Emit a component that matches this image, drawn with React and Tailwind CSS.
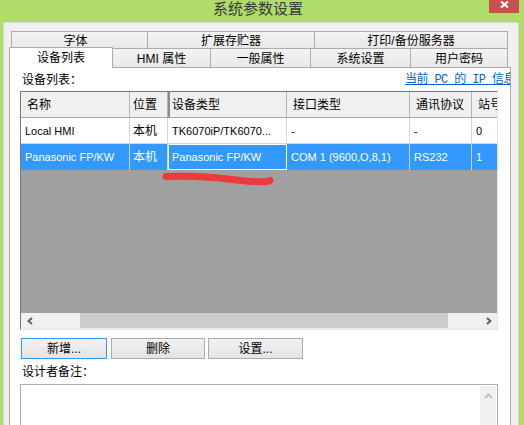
import React from "react";

const Chevron = ({ dir, color = "#606060" }) => {
  const pts =
    dir === "left"
      ? "5,1 1.5,4 5,7"
      : dir === "right"
      ? "1,1 4.5,4 1,7"
      : "1,5 4.5,1.5 8,5";
  const w = dir === "up" ? 9 : 6;
  const h = dir === "up" ? 6 : 8;
  return (
    <svg width={w} height={h} viewBox={`0 0 ${w} ${h}`}>
      <polyline points={pts} fill="none" stroke={color} strokeWidth="2" />
    </svg>
  );
};

const Tab1 = ({ w, first, children }) => (
  <div
    className={`${w} h-full border-t border-r ${first ? "border-l" : ""} border-[#acacac] bg-linear-to-b from-[#f3f3f3] to-[#e9e9e9] flex justify-center pt-[2px] text-[12px] leading-[14px]`}
  >
    {children}
  </div>
);

const Tab2 = ({ w, children }) => (
  <div
    className={`${w} h-[19px] border-t border-r border-[#acacac] bg-linear-to-b from-[#f3f3f3] to-[#e9e9e9] flex justify-center pt-[3px] text-[12px] leading-[14px]`}
  >
    {children}
  </div>
);

const cols = ["w-[109px]", "w-[38px]", "w-[119px]", "w-[123px]", "w-[62px]", "w-[25px]"];

export default function App() {
  const header = ["名称", "位置", "设备类型", "接口类型", "通讯协议", "站号"];
  const row1 = ["Local HMI", "本机", "TK6070iP/TK6070...", "-", "-", "0"];
  const row2 = ["Panasonic FP/KW", "本机", "Panasonic FP/KW", "COM 1 (9600,O,8,1)", "RS232", "1"];
  const latin = [true, false, true, true, true, true];

  return (
    <div className="relative w-[524px] h-[425px] overflow-hidden bg-[#b0dd6a] font-['Liberation_Sans','Noto_Sans_CJK_SC',sans-serif] text-black flex flex-col">
      {/* Title bar */}
      <div className="relative h-[22px] shrink-0 flex justify-center pr-[8px]">
        <span className="text-[15px] leading-[17px] text-[#3a3a3a]">系统参数设置</span>
        <div className="absolute right-[5px] top-0 w-[30px] h-[13px] bg-[#c75050] flex justify-center items-start pt-[1px]">
          <svg width="9" height="7" viewBox="0 0 9 7">
            <path d="M1 0.5 L8 6.5 M8 0.5 L1 6.5" stroke="#fff" strokeWidth="2" />
          </svg>
        </div>
      </div>

      {/* Dialog body */}
      <div className="ml-[3px] w-[516px] flex-1 bg-[#f0f0f0] border-t border-l border-r border-[#d6d6d6] pl-[5px] pt-[8px] flex flex-col">
        {/* Tab row 1 */}
        <div className="flex ml-[2px] h-[17px] shrink-0">
          <Tab1 w="w-[137px]" first>
            <span className="pr-[8px]">字体</span>
          </Tab1>
          <Tab1 w="w-[167px]">扩展存贮器</Tab1>
          <Tab1 w="w-[193px]">打印/备份服务器</Tab1>
        </div>
        {/* Tab row 2 */}
        <div className="flex h-[19px] items-start relative z-10 shrink-0">
          <div className="w-[104px] h-[21px] -mt-[1px] bg-white border-t border-l border-r border-[#acacac] flex justify-center pt-[3px] text-[12px] leading-[14px]">
            设备列表
          </div>
          <Tab2 w="w-[98px]">HMI 属性</Tab2>
          <Tab2 w="w-[100px]">一般属性</Tab2>
          <Tab2 w="w-[100px]">系统设置</Tab2>
          <Tab2 w="w-[97px]">用户密码</Tab2>
        </div>

        {/* Pane */}
        <div className="w-[502px] flex-1 bg-white border border-[#acacac] pl-[10px] overflow-hidden flex flex-col">
          <div className="h-[23px] shrink-0 flex items-center whitespace-nowrap">
            <div className="w-[385px] shrink-0 pl-[2px] text-[12px] leading-[14px]">设备列表：</div>
            <div className="shrink-0 text-[12px] leading-[14px] text-[#0066cc] underline font-['Liberation_Mono','Noto_Sans_CJK_SC',monospace] tracking-[-0.6px]">
              当前 PC 的 IP 信息
            </div>
          </div>

          {/* List view */}
          <div className="w-[478px] shrink-0 border-t border-l border-t-[#7a7a7a] border-l-[#7a7a7a] border-b border-r border-b-[#e3e3e3] border-r-[#e3e3e3] flex flex-col">
            <div className="flex h-[26px] bg-[#f0f0f0] border-b border-[#a8a8a8]">
              {header.map((h, i) => (
                <div
                  key={i}
                  className={`${cols[i]} h-full shrink-0 overflow-hidden whitespace-nowrap flex items-center text-[12px] leading-[14px] ${i < 5 ? "border-r border-[#b4b4b4]" : ""} ${i === 2 ? "shadow-[inset_2px_0_0_#8c8c8c] pl-[4px]" : i === 1 ? "pl-[3px]" : "pl-[6px]"}`}
                >
                  {h}
                </div>
              ))}
            </div>
            <div className="flex h-[26px] bg-white border-b border-[#d4d4d4]">
              {row1.map((c, i) => (
                <div
                  key={i}
                  className={`${cols[i]} h-full shrink-0 overflow-hidden whitespace-nowrap flex items-center ${latin[i] ? "text-[11px]" : "text-[12px]"} leading-[14px] ${i < 5 ? "border-r border-[#d4d4d4]" : ""} ${i === 1 ? "pl-[3px]" : "pl-[4px]"}`}
                >
                  {c}
                </div>
              ))}
            </div>
            <div className="flex h-[26px] bg-[#3399ff] text-white">
              {row2.map((c, i) => (
                <div
                  key={i}
                  className={`${cols[i]} h-full shrink-0 overflow-hidden whitespace-nowrap flex items-center ${latin[i] ? "text-[11px]" : "text-[12px]"} leading-[14px] ${i === 2 ? "border border-white pl-[3px]" : i < 5 ? "border-r border-[#c8d8e8]" : ""} ${i === 1 ? "pl-[3px]" : i === 2 ? "" : "pl-[4px]"}`}
                >
                  {c}
                </div>
              ))}
            </div>
            <div className="h-[143px] bg-[#a0a0a0]" />
            <div className="h-[16px] bg-[#f0f0f0] flex items-start">
              <div className="w-[17px] h-[16px] flex items-center justify-center">
                <Chevron dir="left" />
              </div>
              <div className="flex-1 h-[16px]">
                <div className="ml-[42px] w-[368px] h-[15px] bg-[#cdcdcd]" />
              </div>
              <div className="w-[17px] h-[16px] flex items-center justify-center">
                <Chevron dir="right" />
              </div>
            </div>
          </div>

          {/* Buttons */}
          <div className="mt-[8px] ml-[1px] flex shrink-0">
            <button className="w-[86px] h-[21px] border border-[#3399ff] bg-linear-to-b from-[#f2f2f2] to-[#e4e4e4] text-[12px] leading-[14px] flex items-center justify-center">
              新增...
            </button>
            <button className="ml-[4px] w-[94px] h-[21px] border border-[#acacac] bg-linear-to-b from-[#f2f2f2] to-[#e4e4e4] text-[12px] leading-[14px] flex items-center justify-center">
              删除
            </button>
            <button className="ml-[3px] w-[95px] h-[21px] border border-[#acacac] bg-linear-to-b from-[#f2f2f2] to-[#e4e4e4] text-[12px] leading-[14px] flex items-center justify-center">
              设置...
            </button>
          </div>

          <div className="h-[25px] shrink-0 flex items-center pl-[2px] text-[12px] leading-[14px]">
            设计者备注：
          </div>

          <div className="w-[478px] h-[60px] shrink-0 border border-[#abadb3] p-[1px] flex justify-end">
            <div className="w-[16px] h-full bg-[#f0f0f0] flex justify-center pt-[7px]">
              <Chevron dir="up" color="#c4c4c4" />
            </div>
          </div>
        </div>
      </div>

      {/* Red annotation stroke */}
      <svg className="absolute left-[160px] top-[170px]" width="120" height="20" viewBox="160 170 120 20">
        <path
          d="M166 176.5 Q 200 175.5, 232 179.5 T 270 180.5"
          fill="none"
          stroke="#ee3a3a"
          strokeWidth="7"
          strokeLinecap="round"
        />
      </svg>
    </div>
  );
}
